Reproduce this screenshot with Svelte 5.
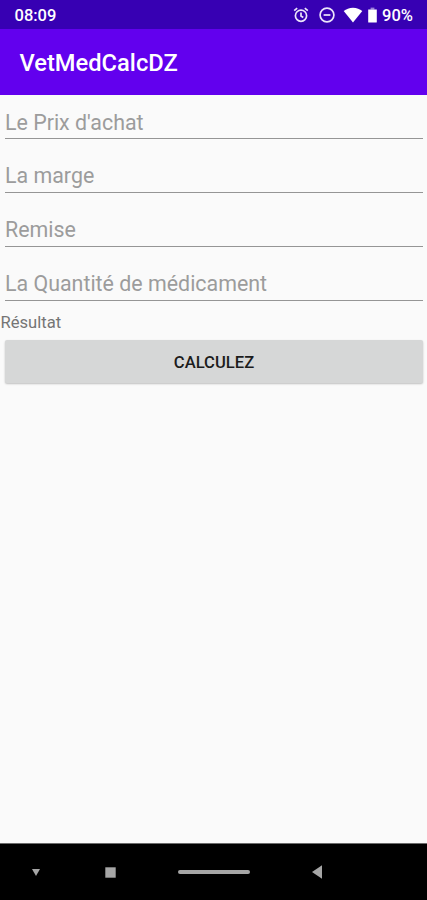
<script lang="ts">
	type Field = {
		id: string;
		label: string;
		value: number | null;
	};

	let fields = $state<Field[]>([
		{ id: "price", label: "Le Prix d'achat", value: null },
		{ id: "margin", label: "La marge", value: null },
		{ id: "discount", label: "Remise", value: null },
		{ id: "quantity", label: "La Quantité de médicament", value: null },
	]);
	let result = $state("Résultat");

	function calculate() {
		const [price, margin, discount, quantity] = fields.map((f) => f.value ?? 0);
		const total = price * (1 + margin / 100) * (1 - discount / 100) * quantity;
		result = total.toFixed(2);
	}
</script>

<div class="screen">
	<div class="status-bar">
		<span class="time">08:09</span>
		<svg class="alarm" width="16" height="16" viewBox="0 0 16 16" aria-hidden="true">
			<circle cx="8" cy="8.7" r="5.6" />
			<path d="M1.2 3.7 4.2 1.2M14.8 3.7l-3-2.5M8 5.6v3.5l2.3 1.4" />
		</svg>
		<svg class="dnd" width="16" height="16" viewBox="0 0 16 16" aria-hidden="true">
			<circle cx="8" cy="8" r="6.9" />
			<path d="M4.6 8h6.8" />
		</svg>
		<svg class="wifi" width="20" height="16" viewBox="0 0 20 16" aria-hidden="true">
			<path d="M10 15.5.7 4C3.2 2 6.3.7 10 .7S16.8 2 19.3 4z" />
		</svg>
		<svg class="battery" width="9" height="16" viewBox="0 0 9 16" aria-hidden="true">
			<path class="cap" d="M2.6.6h3.8v2H2.6z" />
			<path d="M.2 2.4h8.6v12.5q0 .6-.6.6H.8q-.6 0-.6-.6z" />
		</svg>
		<span class="percent">90%</span>
	</div>

	<header class="app-bar">
		<h1>VetMedCalcDZ</h1>
	</header>

	<main>
		{#each fields as field (field.id)}
			<div class="field">
				<input
					type="number"
					placeholder={field.label}
					aria-label={field.label}
					bind:value={field.value}
				/>
			</div>
		{/each}
		<p class="result">{result}</p>
		<button type="button" class="calculate" onclick={calculate}>Calculez</button>
	</main>

	<nav class="nav-bar" aria-label="Navigation">
		<svg width="8" height="7" viewBox="0 0 8 7"><path d="M0 0h8L4 7z" /></svg>
		<svg width="11" height="11" viewBox="0 0 11 11"><path d="M.3.3h10.4v10.4H.3z" /></svg>
		<span class="home"></span>
		<svg width="10" height="14" viewBox="0 0 10 14"><path d="M10 .2v13.6L0 7z" /></svg>
	</nav>
</div>

<style>
	:global(body) {
		margin: 0;
	}

	.screen {
		display: flex;
		flex-direction: column;
		height: 100vh;
		background: #fafafa;
		font-family: Roboto, "Liberation Sans", sans-serif;
	}

	.status-bar {
		display: flex;
		align-items: center;
		box-sizing: border-box;
		height: 29px;
		padding: 1px 14px 0 14.5px;
		background: #3700b3;
		color: #fff;
		font-size: 16.5px;
		font-weight: 500;
	}

	.time {
		margin-right: auto;
	}

	.status-bar svg {
		flex: none;
		fill: #fff;
	}

	.status-bar .alarm,
	.status-bar .dnd {
		fill: none;
		stroke: #ece5fa;
		stroke-width: 1.7;
	}

	.alarm {
		margin-right: 10px;
	}

	.dnd {
		margin-right: 8px;
	}

	.wifi {
		margin-right: 5px;
	}

	.battery {
		margin-right: 5px;
	}

	.battery .cap {
		opacity: 0.5;
	}

	.app-bar {
		display: flex;
		align-items: center;
		box-sizing: border-box;
		height: 66px;
		padding: 2px 19.5px 0;
		background: #6200ee;
		color: #fff;
	}

	h1 {
		margin: 0;
		font-size: 23.7px;
		font-weight: 500;
	}

	main {
		display: flex;
		flex: 1;
		flex-direction: column;
	}

	.field {
		box-sizing: border-box;
		height: 53.8px;
		padding: 11px 4px 0 5px;
	}

	input {
		display: block;
		box-sizing: border-box;
		width: 100%;
		height: 33.4px;
		padding: 0 1px 0 0;
		border: 0;
		border-bottom: 1px solid #959595;
		border-radius: 0;
		outline: none;
		background: none;
		color: #212121;
		font: 400 21.4px/32px Roboto, "Liberation Sans", sans-serif;
		appearance: textfield;
	}

	input::placeholder {
		color: #9c9c9c;
		opacity: 1;
	}

	input:focus {
		border-bottom-color: #03dac5;
	}

	.result {
		margin: 3px 0 0 0.5px;
		color: #757575;
		font-size: 16.6px;
		line-height: 20px;
	}

	.calculate {
		height: 43px;
		margin: 6.5px 4px 0 5px;
		padding: 2px 0 0;
		border: 0;
		border-radius: 2px;
		background: #d6d7d7;
		box-shadow: 0 1px 2px rgba(0, 0, 0, 0.24);
		color: #1c1c1c;
		font: 500 16.6px Roboto, "Liberation Sans", sans-serif;
		text-transform: uppercase;
	}

	.nav-bar {
		display: grid;
		grid-template-columns: 72px 77px 130px 76px 1fr;
		align-items: center;
		justify-items: center;
		box-sizing: border-box;
		height: 57px;
		border-top: 1px solid #6b6b6b;
		background: #000;
	}

	.nav-bar svg {
		fill: #a6a6a6;
	}

	.home {
		width: 72px;
		height: 4px;
		border-radius: 2px;
		background: #a6a6a6;
	}
</style>
